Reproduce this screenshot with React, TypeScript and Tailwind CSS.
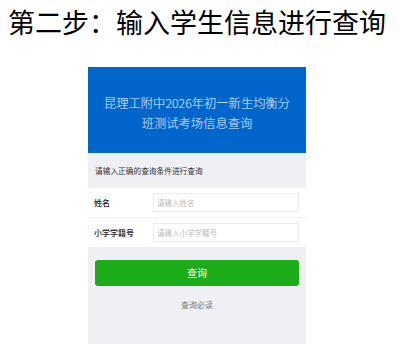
export default function App() {
  const cjk = { fontFamily: '"Noto Sans CJK SC", sans-serif' };

  return (
    <div className="w-[400px] h-[358px] bg-white" style={cjk}>
      <h1 className="h-[67px] pt-[5px] pl-[8px] text-[27px] leading-[34px] font-normal text-black whitespace-nowrap">
        第二步：输入学生信息进行查询
      </h1>

      <div className="ml-[88px] w-[218px] h-[277px] bg-[#efeff4] flex flex-col">
        <div className="h-[86px] bg-[#0066cc] flex flex-col items-center justify-center pt-[5px] text-[12.3px] leading-[20px] font-light text-white/90">
          <p>昆理工附中2026年初一新生均衡分</p>
          <p>班测试考场信息查询</p>
        </div>

        <div className="h-[35px] flex items-center pl-[7px] text-[7.7px] text-[#333]">
          请输入正确的查询条件进行查询
        </div>

        <div className="bg-white h-[59px] flex flex-col">
          <div className="h-[30px] flex items-center pl-[6px] pr-[7px] border-b border-[#f1f1f1]">
            <span className="w-[59px] text-[8px] font-medium text-[#222]">姓名</span>
            <div className="flex-1 h-[19px] border border-[#ececec] flex items-center pl-[3px] text-[7.5px] text-[#bbb]">
              请输入姓名
            </div>
          </div>
          <div className="h-[29px] flex items-center pl-[6px] pr-[7px]">
            <span className="w-[59px] text-[8px] font-medium text-[#222]">小学学籍号</span>
            <div className="flex-1 h-[19px] border border-[#ececec] flex items-center pl-[3px] text-[7.5px] text-[#bbb]">
              请输入小学学籍号
            </div>
          </div>
        </div>

        <div className="px-[7px] pt-[11px]">
          <button className="w-full h-[26px] rounded-[3px] bg-[#1aad19] text-white text-[10px]">
            查询
          </button>
          <p className="mt-[13px] text-center text-[8px] text-[#777]">查询必读</p>
        </div>
      </div>
    </div>
  );
}
